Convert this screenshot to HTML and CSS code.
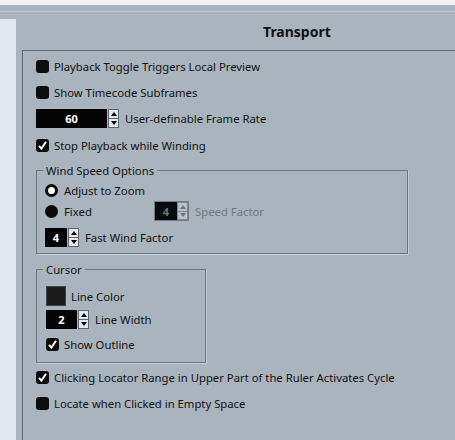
FILE: index.html
```html
<!DOCTYPE html>
<html>
<head>
<meta charset="utf-8">
<link rel="stylesheet" href="styles.css">
</head>
<body>
<div class="topstrip"></div>
<div class="toolbar"></div>
<div class="main">
  <div class="sidebar"></div>
  <div class="column">
    <div class="header"><span class="title">Transport</span></div>
    <div class="content">
      <div class="row r1"><span class="cb"></span><span>Playback Toggle Triggers Local Preview</span></div>
      <div class="row r2"><span class="cb"></span><span>Show Timecode Subframes</span></div>
      <div class="row r3">
        <span class="spin wide"><span class="field">60</span><span class="arrows"><span class="up"></span><span class="down"></span></span></span>
        <span>User-definable Frame Rate</span>
      </div>
      <div class="row r4"><span class="cb"><svg viewBox="0 0 13 13" width="13" height="13"><path d="M3 6.8 L5.4 9.6 L10 2.8" fill="none" stroke="#fff" stroke-width="1.9"/></svg></span><span>Stop Playback while Winding</span></div>

      <div class="group wind">
        <span class="gtitle">Wind Speed Options</span>
        <div class="grow g1"><span class="radio on"></span><span>Adjust to Zoom</span></div>
        <div class="grow g2">
          <span class="radiolabel"><span class="radio"></span><span>Fixed</span></span>
          <span class="spin small disabled"><span class="field">4</span><span class="arrows"><span class="up"></span><span class="down"></span></span></span>
          <span class="muted">Speed Factor</span>
        </div>
        <div class="grow g3">
          <span class="spin small"><span class="field">4</span><span class="arrows"><span class="up"></span><span class="down"></span></span></span>
          <span>Fast Wind Factor</span>
        </div>
      </div>

      <div class="group cursor">
        <span class="gtitle">Cursor</span>
        <div class="grow c1"><span class="swatch"></span><span>Line Color</span></div>
        <div class="grow c2">
          <span class="spin medium"><span class="field">2</span><span class="arrows"><span class="up"></span><span class="down"></span></span></span>
          <span>Line Width</span>
        </div>
        <div class="grow c3"><span class="cb"><svg viewBox="0 0 13 13" width="13" height="13"><path d="M3 6.8 L5.4 9.6 L10 2.8" fill="none" stroke="#fff" stroke-width="1.9"/></svg></span><span>Show Outline</span></div>
      </div>

      <div class="row b1"><span class="cb"><svg viewBox="0 0 13 13" width="13" height="13"><path d="M3 6.8 L5.4 9.6 L10 2.8" fill="none" stroke="#fff" stroke-width="1.9"/></svg></span><span>Clicking Locator Range in Upper Part of the Ruler Activates Cycle</span></div>
      <div class="row b2"><span class="cb"></span><span>Locate when Clicked in Empty Space</span></div>
    </div>
  </div>
</div>
</body>
</html>
```
FILE: styles.css
```css
html, body {
  margin: 0;
  padding: 0;
}
body {
  width: 455px;
  height: 440px;
  overflow: hidden;
  background: #a9b4be;
  font-family: "Noto Sans", "Open Sans", sans-serif;
  font-size: 11.3px;
  color: #111;
}
.topstrip {
  height: 5px;
  background: #f2f2f2;
}
.toolbar {
  height: 6px;
  border-bottom: 1px solid #c3ccd5;
}
.main {
  display: flex;
  height: 428px;
}
.sidebar {
  width: 16px;
  margin-top: 7px;
  background: #e1e8ef;
}
.column {
  flex: 1;
  margin-left: 6px;
  display: flex;
  flex-direction: column;
}
.header {
  height: 38px;
  display: flex;
  align-items: center;
  padding-left: 241px;
}
.title {
  font-weight: bold;
  font-size: 14px;
  color: #111;
}
.content {
  flex: 1;
  border-top: 1px solid #5f6a75;
  border-left: 1px solid #5f6a75;
  padding: 2px 0 0 13px;
}
.row {
  display: flex;
  align-items: center;
  height: 26px;
  gap: 5px;
}
.r3 { height: 27px; gap: 6px; }
.cb {
  width: 13px;
  height: 13px;
  background: #0d0d0d;
  border-radius: 3px;
  display: inline-flex;
  flex: none;
}
.cb svg { display: block; }
.spin {
  display: inline-flex;
  height: 19px;
  flex: none;
}
.spin .field {
  background: #050505;
  color: #fff;
  font-weight: bold;
  font-size: 11px;
  display: flex;
  align-items: center;
  justify-content: center;
}
.spin.wide .field { width: 71px; }
.spin.small .field { width: 22px; }
.spin.medium .field { width: 31px; }
.arrows {
  width: 11px;
  display: flex;
  flex-direction: column;
  border: 1px solid #5d6670;
  margin-left: 1px;
  box-sizing: border-box;
  background: #5d6670;
  gap: 1px;
}
.arrows span {
  flex: 1;
  background: #e4e8ec;
  display: flex;
  align-items: center;
  justify-content: center;
}
.arrows .up::before {
  content: "";
  border-left: 3px solid transparent;
  border-right: 3px solid transparent;
  border-bottom: 4px solid #000;
}
.arrows .down::before {
  content: "";
  border-left: 3px solid transparent;
  border-right: 3px solid transparent;
  border-top: 4px solid #000;
}
.group {
  border: 1px solid #6b7682;
  box-shadow: 1px 1px 0 #c4cdd6;
  display: flex;
  flex-direction: column;
  align-items: flex-start;
}
.gtitle {
  display: inline-block;
  line-height: 16px;
  margin-top: -8px;
  padding: 0 3px;
  background: #a9b4be;
}
.wind {
  width: 362px;
  margin-top: 12px;
  padding: 0 0 5px 8px;
}
.wind .gtitle { margin-left: -2px; }
.grow {
  display: flex;
  align-items: center;
  gap: 6px;
}
.g1 { height: 20px; margin-top: 1px; }
.g2 { height: 22px; gap: 6px; }
.g3 { height: 22px; margin-top: 4px; gap: 6px; }
.radiolabel {
  display: inline-flex;
  align-items: center;
  gap: 6px;
  width: 103px;
}
.radio {
  width: 13px;
  height: 13px;
  border-radius: 50%;
  background: #0a0a0a;
  box-sizing: border-box;
  flex: none;
}
.radio.on {
  border: 3px solid #0a0a0a;
  background: #fff;
}
.spin.disabled {
  height: 20px;
  border: 1px solid #6f7a86;
  box-sizing: border-box;
}
.spin.disabled .field {
  color: #6b7682;
  background: #080a0c;
}
.spin.disabled .arrows {
  border-color: #7a8591;
  background: #7a8591;
  margin-left: 0;
}
.spin.disabled .arrows span { background: #b9c1c9; }
.spin.disabled .arrows .up::before { border-bottom-color: #6b7682; }
.spin.disabled .arrows .down::before { border-top-color: #6b7682; }
.muted { color: #6d7884; }
.cursor {
  width: 159px;
  margin-top: 15px;
  padding: 0 0 8px 9px;
}
.cursor .gtitle { margin-left: -3px; }
.c1 { height: 20px; margin-top: 8px; gap: 5px; }
.c2 { height: 21px; margin-top: 3px; gap: 6px; }
.c3 { height: 20px; margin-top: 4px; gap: 5px; }
.swatch {
  width: 20px;
  height: 20px;
  background: #1b1b1b;
  border: 1px solid #3d434a;
  box-sizing: border-box;
}
.b1 { margin-top: 1px; }
```
